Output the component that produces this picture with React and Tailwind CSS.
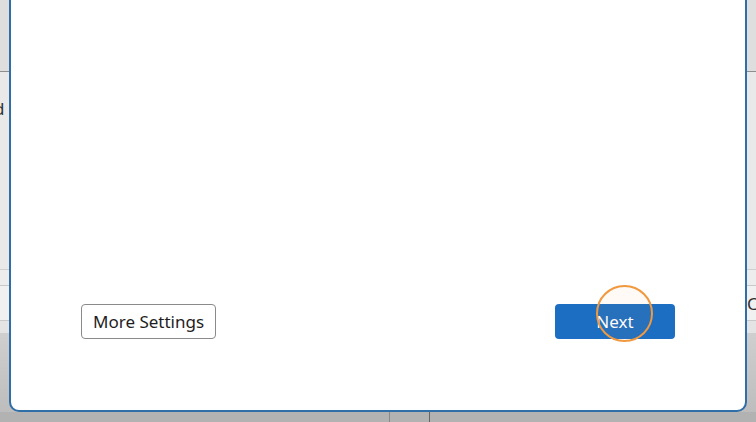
import React from 'react';

export default function App() {
  const font = { fontFamily: '"Segoe UI", "Noto Sans", "Open Sans", sans-serif' };

  return (
    <div className="relative w-[756px] h-[422px] overflow-hidden bg-[#e6e6e6]" style={font}>
      {/* Background window behind the dialog */}
      <div className="flex flex-col h-full">
        <div className="h-[72px] bg-[#dedede] border-b border-[#8e8e8e]" />
        <div className="h-[197px] bg-[#e9e9e9] relative">
          <span className="absolute left-[-6px] top-[24px] text-[17px] text-[#333]">d</span>
        </div>
        <div className="h-[16px] bg-[#ededed] border-t border-[#cfcfcf]" />
        <div className="h-[36px] bg-[#f1f1f1] border-y border-[#c9c9c9] relative">
          <span className="absolute left-[747px] top-[9px] text-[17px] text-[#333] leading-none">C</span>
        </div>
        <div className="h-[12px] bg-[#e4e4e4]" />
        <div className="flex-1 bg-gradient-to-b from-[#cfcfcf] to-[#bdbdbd]" />
        <div className="h-[10px] bg-[#b2b2b2] flex">
          <div className="w-[390px] border-r border-[#8a8a8a]" />
          <div className="w-[40px] border-r border-[#666]" />
        </div>
      </div>

      {/* Dialog */}
      <div className="absolute left-[9px] top-[-20px] w-[738px] h-[432px] bg-white border-2 border-[#2f6ea6] rounded-b-[10px] flex flex-col justify-end">
        <div className="flex items-center justify-between pl-[70px] pr-[70px] pb-[71px]">
          <button className="h-[35px] px-[11px] border border-[#8a8a8a] rounded-[4px] bg-white text-[17px] text-[#1e1e1e]">
            More Settings
          </button>
          <button className="relative h-[35px] w-[120px] rounded-[4px] bg-[#1b6ec2] text-[17px] text-white">
            Next
            <span className="absolute left-[41px] top-[-19px] w-[57px] h-[57px] rounded-full border-2 border-[#f0993f] bg-[#f6a04a]/5" />
          </button>
        </div>
      </div>
    </div>
  );
}
